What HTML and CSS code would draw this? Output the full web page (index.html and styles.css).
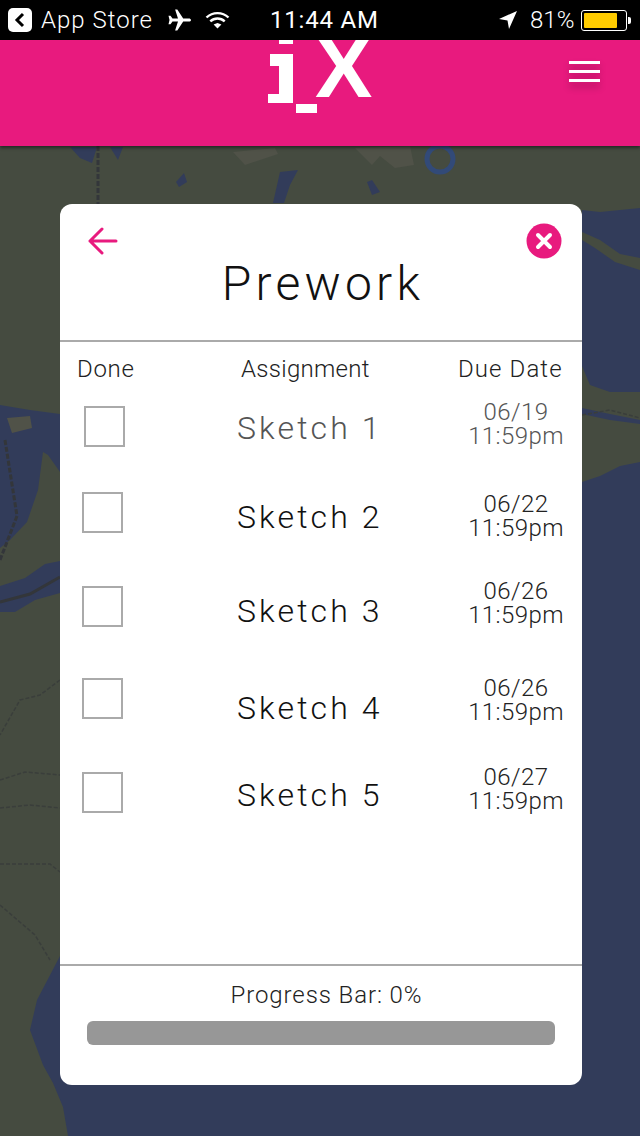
FILE: index.html
```html
<!DOCTYPE html>
<html><head>
<meta charset="utf-8">
<title>Prework</title>
<link rel="stylesheet" href="styles.css">
</head><body>
<div class="screen">
  <svg class="map" width="640" height="1136" viewBox="0 0 640 1136">
    <rect class="water" width="640" height="1136"/>
    <polygon class="land" points="0,140 640,140 640,208 600,212 582,210 582,960 60,956 37,1000 30,1030 43,1065 53,1083 63,1107 68,1136 0,1136"/>
    <polygon class="land" points="582,232 600,240 620,254 640,258 640,270 615,262 595,248 582,240"/>
    <polygon class="land" points="582,366 590,385 610,392 640,392 640,462 620,466 600,476 582,482"/>
    <polygon class="water" points="582,408 610,414 640,420 640,424 610,420 582,414"/>
    <polygon class="water" points="0,405 30,410 60,414 60,472 48,455 43,452 38,490 27,522 10,540 0,548"/>
    <polygon class="water" points="0,586 25,578 45,564 60,561 60,593 35,600 15,612 0,612"/>
    <polygon class="water" points="70,147 97,147 92,163 80,158"/>
    <polygon class="water" points="110,147 123,147 118,160"/>
    <polygon class="water" points="176,182 184,173 187,182 179,187"/>
    <polygon class="water" points="280,172 298,170 290,185 284,203 273,203"/>
    <polygon class="water" points="367,182 372,180 380,192 372,195"/>
    <circle class="ring" cx="440" cy="159" r="13"/>
    <polygon class="patch" points="233,152 275,148 278,154 245,165"/>
    <polygon class="patch" points="355,148 410,146 414,165 395,168 380,156 372,165"/>
    <polygon class="patch" points="7,418 30,416 32,428 12,433"/>
    <polyline class="border" points="98,146 98,204"/>
    <polyline class="border" points="5,440 17,516 0,560"/>
    <polyline class="border solid" points="0,602 30,594 60,577"/>
    <polyline class="state" points="60,680 40,695 20,700 0,735"/>
    <polyline class="state" points="0,780 25,772 60,775"/>
    <polyline class="state" points="0,808 30,805 60,808"/>
    <polyline class="state" points="0,864 50,864 60,872"/>
    <polyline class="state" points="0,905 35,935 50,960"/>
    <polyline class="state" points="582,415 610,410 640,418"/>
  </svg>

  <div class="status">
    <div class="status-left">
      <span class="back-app"><svg width="12" height="16" viewBox="0 0 12 16"><polyline points="9,2 3,8 9,14" fill="none" stroke="#000" stroke-width="3"/></svg></span>
      <span class="app-name">App Store</span>
      <svg class="plane" width="25" height="24" viewBox="0 0 24 24"><path fill="#fff" d="M23.5 12c0-1-1-1.6-2.2-1.6h-5.6L9.8 1.5H7.6l2.9 8.9H5L3 7.8H1l1 4.2-1 4.2h2l2-2.6h5.5l-2.9 8.9h2.2l5.9-8.9h5.6c1.2 0 2.2-.6 2.2-1.6z"/></svg>
      <svg class="wifi" width="25" height="18" viewBox="0 0 25 18"><path fill="none" stroke="#fff" stroke-width="2.4" d="M1.5 6.5a16 16 0 0 1 22 0M5.3 10.3a10.5 10.5 0 0 1 14.4 0"/><polygon fill="#fff" points="12.5,17.5 8.6,13.6 12.5,12 16.4,13.6"/></svg>
    </div>
    <span class="time">11:44 AM</span>
    <div class="status-right">
      <svg class="locate" width="20" height="20" viewBox="0 0 20 20"><polygon fill="#fff" points="19,1 11,19 9.5,10.5 1,9"/></svg>
      <span class="pct">81%</span>
      <span class="battery"><span class="battery-fill"></span></span>
      <span class="battery-nub"></span>
    </div>
  </div>

  <header class="topbar">
    <div class="logo">
      <span class="i-dot"></span>
      <span class="i-top"></span>
      <span class="i-stem"></span>
      <span class="i-foot"></span>
      <span class="under"></span>
      <span class="logo-x">X</span>
    </div>
    <div class="burger"><span></span><span></span><span></span></div>
  </header>

  <main class="card">
    <div class="card-head">
      <div class="head-icons">
        <svg width="30" height="28" viewBox="0 0 30 28"><path fill="none" stroke="#e81a7e" stroke-width="3" stroke-linecap="round" stroke-linejoin="round" d="M14 2 2 14l12 12M2 14h26"/></svg>
        <svg width="36" height="36" viewBox="0 0 36 36"><circle cx="18" cy="18" r="17.5" fill="#e81a7e"/><path stroke="#fff" stroke-width="4" stroke-linecap="round" d="m12 12 12 12M24 12 12 24"/></svg>
      </div>
      <h1>Prework</h1>
    </div>

    <div class="cols">
      <span class="col-done">Done</span>
      <span class="col-name">Assignment</span>
      <span class="col-date">Due Date</span>
    </div>

    <div class="rows">
      <div class="row first">
        <span class="check"></span>
        <span class="name">Sketch 1</span>
        <span class="date">06/19<br>11:59pm</span>
      </div>
      <div class="row">
        <span class="check"></span>
        <span class="name">Sketch 2</span>
        <span class="date">06/22<br>11:59pm</span>
      </div>
      <div class="row">
        <span class="check"></span>
        <span class="name">Sketch 3</span>
        <span class="date">06/26<br>11:59pm</span>
      </div>
      <div class="row">
        <span class="check"></span>
        <span class="name">Sketch 4</span>
        <span class="date">06/26<br>11:59pm</span>
      </div>
      <div class="row">
        <span class="check"></span>
        <span class="name">Sketch 5</span>
        <span class="date">06/27<br>11:59pm</span>
      </div>
    </div>

    <div class="progress">
      <p>Progress Bar: 0%</p>
      <div class="bar"></div>
    </div>
  </main>
</div>
</body></html>
```

FILE: styles.css
```css
html, body {
    margin: 0;
    padding: 0;
}
body {
    font-family: Roboto, "Liberation Sans", sans-serif;
    background-color: #323c5a;
}
.screen {
    position: relative;
    width: 640px;
    height: 1136px;
    overflow: hidden;
}

/* map behind everything */
.map {
    position: absolute;
    left: 0;
    top: 0;
}
.water { fill: #323c5a; }
.land { fill: #454b40; }
.patch { fill: #505248; }
.ring {
    fill: none;
    stroke: #324a78;
    stroke-width: 5;
}
.border, .state {
    fill: none;
    stroke: #33363a;
}
.border {
    stroke-width: 3;
    stroke-dasharray: 5 2;
}
.border.solid { stroke-dasharray: none; }
.state {
    stroke: #3a3e3b;
    stroke-width: 1.5;
    stroke-dasharray: 4 2;
}

/* status bar */
.status {
    position: relative;
    height: 40px;
    background-color: #000;
    color: #fff;
    font-size: 24px;
    display: flex;
    align-items: center;
}
.status-left {
    display: flex;
    align-items: center;
    padding-left: 8px;
}
.back-app {
    width: 24px;
    height: 24px;
    background-color: #fff;
    border-radius: 5px;
    display: flex;
    align-items: center;
    justify-content: center;
}
.app-name {
    margin-left: 9px;
    font-weight: 300;
    letter-spacing: 1px;
}
.plane { margin-left: 14px; }
.wifi { margin-left: 13px; }
.time {
    position: absolute;
    left: 270px;
    top: 6px;
    font-weight: 400;
    letter-spacing: 0.8px;
}
.status-right {
    position: absolute;
    left: 498px;
    top: 0;
    height: 40px;
    display: flex;
    align-items: center;
}
.pct {
    margin-left: 12px;
    font-weight: 300;
}
.battery {
    margin-left: 7px;
    width: 40px;
    height: 15px;
    border: 1px solid #fff;
    border-radius: 3px;
    padding: 2px;
    box-sizing: content-box;
    display: flex;
}
.battery-fill {
    width: 33px;
    background-color: #fc0;
    border-radius: 1px;
}
.battery-nub {
    width: 3px;
    height: 7px;
    margin-left: 1px;
    background-color: #fff;
    border-radius: 0 2px 2px 0;
}

/* pink bar */
.topbar {
    position: relative;
    height: 106px;
    background-color: #e81a7e;
    box-shadow: 0 2px 3px rgba(0, 0, 0, 0.45);
}
.logo {
    position: absolute;
    left: 260px;
    top: 0;
    width: 120px;
    height: 80px;
    overflow: hidden;
}
.logo span {
    position: absolute;
    background-color: #fff;
}
.i-dot { left: 19px; top: 0; width: 14px; height: 4px; }
.i-top { left: 10px; top: 14px; width: 23px; height: 12px; }
.i-stem { left: 19px; top: 14px; width: 14px; height: 49px; }
.i-foot { left: 8px; top: 54px; width: 25px; height: 9px; }
.under { left: 36px; top: 64px; width: 21px; height: 9px; }
.logo span.logo-x {
    left: 55px;
    top: -23px;
    background: none;
    color: #fff;
    font-family: "Liberation Sans", sans-serif;
    font-weight: 700;
    font-size: 86px;
    line-height: 100px;
}
.burger {
    position: absolute;
    left: 569px;
    top: 21px;
    width: 31px;
    display: flex;
    flex-direction: column;
    gap: 6px;
}
.burger span {
    height: 3px;
    background-color: #fff;
    box-shadow: 0 5px 7px rgba(0, 0, 0, 0.28);
}

/* card */
.card {
    position: relative;
    width: 522px;
    height: 881px;
    margin: 58px 0 0 60px;
    background-color: #fff;
    border-radius: 12px;
    color: #222;
    font-weight: 300;
    display: flex;
    flex-direction: column;
}
.card-head {
    height: 136px;
    border-bottom: 2px solid #aaa;
    box-sizing: content-box;
}
.head-icons {
    display: flex;
    justify-content: space-between;
    align-items: center;
    padding: 19px 20px 0 28px;
}
h1 {
    margin: -3px 0 0;
    padding-left: 4px;
    text-align: center;
    font-size: 48px;
    font-weight: 300;
    line-height: 56px;
    letter-spacing: 4.2px;
    color: #111;
}
.cols {
    position: relative;
    height: 58px;
    font-size: 24px;
    line-height: 55px;
}
.cols span { position: absolute; top: 0; }
.col-done { left: 17px; letter-spacing: 0.7px; }
.col-name { left: 181px; letter-spacing: 0.3px; }
.col-date { left: 398px; letter-spacing: 1.1px; }

.rows {
    display: flex;
    flex-direction: column;
}
.row {
    display: grid;
    grid-template-columns: 177px 200px 145px;
    height: 94px;
    align-items: start;
}
.row:nth-child(1) { height: 86px; }
.row:nth-child(3) { height: 92px; }
.check {
    width: 41px;
    height: 41px;
    margin: 6px 0 0 22px;
    border: 2px solid #aaa;
    box-sizing: border-box;
}
.row.first .check { margin-left: 24px; }
.name {
    font-size: 32px;
    line-height: 40px;
    letter-spacing: 3.1px;
    color: #111;
}
.date {
    font-size: 24px;
    line-height: 24px;
    letter-spacing: 0.4px;
    text-align: center;
    margin-left: 13px;
    color: #222;
}
.row.first .name, .row.first .date { color: #555; }
.row:nth-child(1) .name { margin-top: 8px; }
.row:nth-child(2) .name { margin-top: 11px; }
.row:nth-child(3) .name { margin-top: 11px; }
.row:nth-child(4) .name { margin-top: 16px; }
.row:nth-child(5) .name { margin-top: 9px; }
.row:nth-child(1) .date { margin-top: 0; }
.row:nth-child(2) .date { margin-top: 6px; }
.row:nth-child(3) .date { margin-top: -1px; }
.row:nth-child(4) .date { margin-top: 4px; }
.row:nth-child(5) .date { margin-top: -1px; }

.progress {
    position: absolute;
    left: 0;
    right: 0;
    top: 760px;
    border-top: 2px solid #aaa;
}
.progress p {
    margin: 0;
    padding: 2px 0 0 11px;
    text-align: center;
    font-size: 24px;
    line-height: 55px;
    letter-spacing: 0.9px;
    color: #222;
}
.bar {
    height: 24px;
    margin: -2px 27px 0;
    background-color: #979797;
    border-radius: 6px;
}
```
